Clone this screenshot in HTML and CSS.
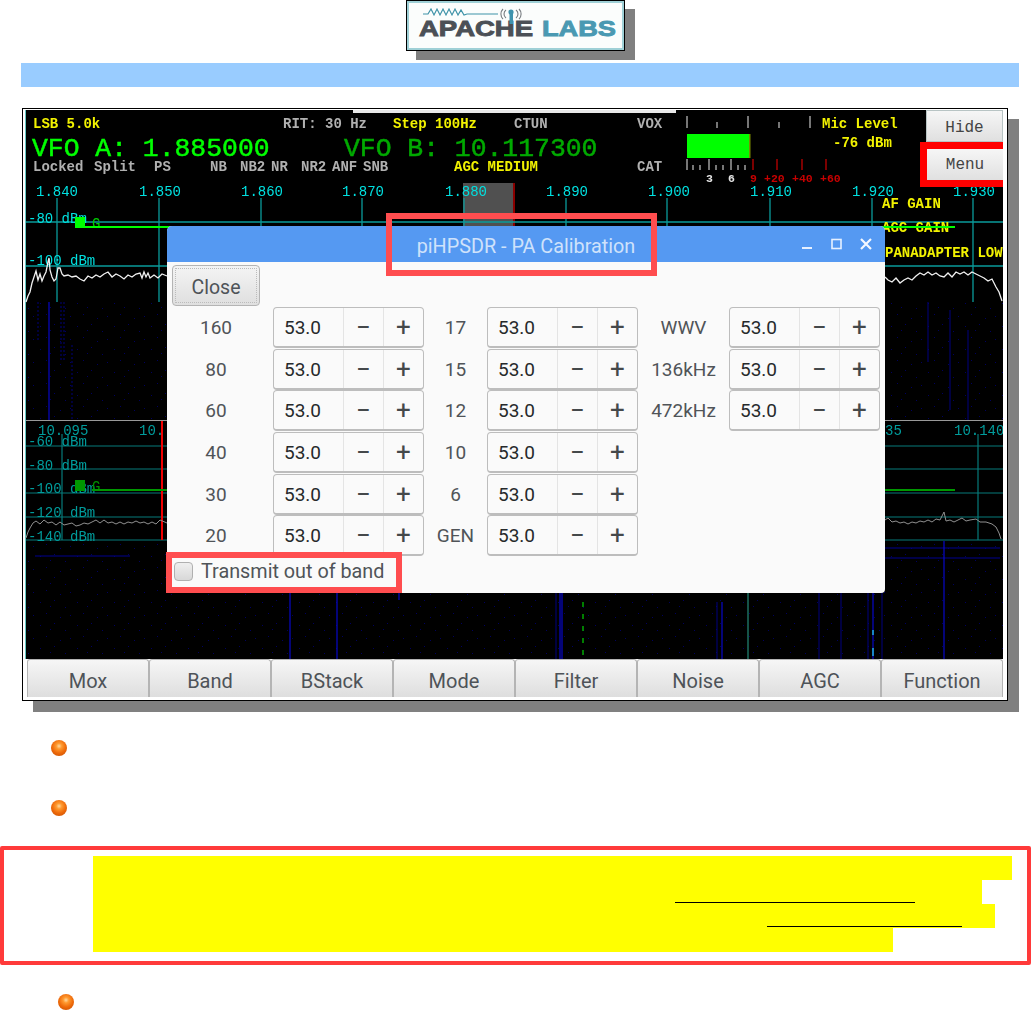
FILE: index.html
```html
<!DOCTYPE html>
<html lang="en">
<head>
<meta charset="utf-8">
<title>piHPSDR - PA Calibration</title>
<link rel="stylesheet" href="styles.css">
</head>
<body>
<header class="logo-row">
  <div class="logo">
    <svg class="logo-art" viewBox="408 2 215 47" width="215" height="47">
      <polyline class="logo-wave" points="423,14 428,14 431,9 434,15 437,9 440,15 443,9 446,15 449,9 452,15 455,9 458,15 461,10 464,15 467,14 498,14"/>
      <path class="logo-arc" d="M503 9a7 7 0 0 0 0 10M506 10a5 5 0 0 0 0 8M519 9a7 7 0 0 1 0 10M516 10a5 5 0 0 1 0 8"/>
      <text class="logo-dark" x="419" y="36" textLength="114" lengthAdjust="spacingAndGlyphs">APACHE</text>
      <text class="logo-blue" x="542" y="36" textLength="74" lengthAdjust="spacingAndGlyphs">LABS</text>
      <rect class="logo-mast" x="509.5" y="11" width="3.5" height="13"/>
      <circle class="logo-top" cx="511" cy="12" r="2.6"/>
    </svg>
  </div>
</header>
<div class="blue-bar"></div>
<figure class="shot">
  <div class="screen">
    <svg class="sdr" viewBox="25 110 978 549" width="978" height="549">
      <defs>
        <pattern id="noise" width="37" height="23" patternUnits="userSpaceOnUse">
          <rect x="3" y="4" width="1" height="1" class="fall-dot"/>
          <rect x="17" y="2" width="1" height="1" class="fall-dot"/>
          <rect x="28" y="9" width="1" height="1" class="fall-dot"/>
          <rect x="9" y="15" width="1" height="1" class="fall-dot"/>
          <rect x="23" y="19" width="1" height="1" class="fall-dot"/>
          <rect x="33" y="17" width="1" height="1" class="fall-dot"/>
          <rect x="13" y="8" width="1" height="1" class="fall-dot"/>
        </pattern>
      </defs>
      <rect class="bg" x="25" y="110" width="978" height="549"/>
      <rect class="top-strip" x="353" y="110" width="323" height="3"/>
      <rect class="edge" x="25" y="110" width="1" height="549"/>

      <rect class="noise" x="26" y="302" width="977" height="118"/>
      <rect class="noise" x="26" y="541" width="977" height="118"/>

      <text class="t y" x="33" y="128">LSB 5.0k</text>
      <text class="t g" x="283" y="128">RIT: 30 Hz</text>
      <text class="t y" x="393" y="128">Step 100Hz</text>
      <text class="t g" x="514" y="128">CTUN</text>
      <text class="t g" x="637" y="128">VOX</text>
      <text class="t y" x="822" y="128">Mic Level</text>
      <text class="t y" x="833" y="147">-76 dBm</text>
      <text class="vfo vfo-a" x="32" y="156">VFO A: 1.885000</text>
      <text class="vfo vfo-b" x="344" y="156">VFO B: 10.117300</text>
      <text class="t g" x="33" y="171">Locked</text>
      <text class="t g" x="94" y="171">Split</text>
      <text class="t g" x="154" y="171">PS</text>
      <text class="t g" x="210" y="171">NB</text>
      <text class="t g" x="240" y="171">NB2</text>
      <text class="t g" x="271" y="171">NR</text>
      <text class="t g" x="301" y="171">NR2</text>
      <text class="t g" x="332" y="171">ANF</text>
      <text class="t g" x="363" y="171">SNB</text>
      <text class="t y" x="454" y="171">AGC MEDIUM</text>
      <text class="t g" x="637" y="171">CAT</text>

      <path class="tick-g" d="M687 116v12M717 122v6M748 116v12M779 122v6M810 116v12"/>
      <rect class="meter" x="687" y="134" width="63" height="24"/>
      <rect class="meter-end" x="749" y="134" width="1.5" height="24"/>
      <path class="tick-g" d="M687 159v11M693 165v5M700 165v5M709 159v11M716 165v5M723 165v5M731 159v11M738 165v5M745 165v5"/>
      <path class="tick-r" d="M753 159v11M777 159v11M802 159v11M826 159v11"/>
      <text class="mini w" x="706" y="182">3</text>
      <text class="mini w" x="728" y="182">6</text>
      <text class="mini r" x="750" y="182">9</text>
      <text class="mini r" x="764" y="182">+20</text>
      <text class="mini r" x="792" y="182">+40</text>
      <text class="mini r" x="820" y="182">+60</text>

      <rect class="band" x="463" y="183" width="50" height="43"/>
      <rect class="band-edge" x="513" y="183" width="2" height="43"/>
      <path class="grid" d="M57 198v104M159 198v104M261 198v104M362 198v104M464 198v104M566 198v104M667 198v104M770 198v104M872 198v104M973 198v104M26 222h977M26 266h977"/>
      <text class="f c" x="36" y="196">1.840</text>
      <text class="f c" x="139" y="196">1.850</text>
      <text class="f c" x="241" y="196">1.860</text>
      <text class="f c" x="342" y="196">1.870</text>
      <text class="f c" x="445" y="196">1.880</text>
      <text class="f c" x="546" y="196">1.890</text>
      <text class="f c" x="648" y="196">1.900</text>
      <text class="f c" x="750" y="196">1.910</text>
      <text class="f c" x="852" y="196">1.920</text>
      <text class="f c" x="953" y="196">1.930</text>
      <text class="f c" x="28" y="223">-80 dBm</text>
      <text class="f c" x="28" y="265">-100 dBm</text>
      <text class="t y" x="882" y="208">AF GAIN</text>
      <text class="t y" x="882" y="232">AGC GAIN</text>
      <text class="t y" x="885" y="257">PANADAPTER LOW</text>
      <rect class="mark" x="75" y="217" width="10" height="11"/>
      <text class="f mark-t" x="92" y="228">G</text>
      <path class="mark-line" d="M85 227H170M882 227H955"/>
      <polyline class="trace" points="26,302 28,296 30,292 32,283 34,277 36,271 38,280 40,274 42,281 44,276 46,272 48,262 49,258 50,270 52,277 54,281 56,279 58,268 60,268 62,274 64,276 68,275 72,277 76,276 80,279 84,281 88,276 92,278 96,275 100,277 104,274 108,272 112,277 116,274 120,276 124,279 128,275 132,277 136,274 140,273 142,278 144,272 146,277 148,273 150,278 154,275 158,278 162,274 167,276"/>
      <polyline class="trace" points="885,277 888,280 892,282 896,278 900,283 904,280 908,278 912,280 916,276 920,273 924,275 928,272 932,275 936,273 940,276 944,277 948,273 952,277 956,272 960,274 964,272 968,275 972,272 976,274 980,276 984,278 988,281 992,279 996,287 999,292 1001,298 1002,301"/>

      <path class="fall" d="M49 302v118"/>
      <path class="fall-dash" d="M64 302v60M38 302v40M72 345v75M61 302v60"/>
      <path class="fall-faint" d="M928 302v60M950 310v100M968 330v90"/>

      <rect class="divider" x="26" y="420" width="977" height="1"/>
      <rect class="bg" x="26" y="421" width="977" height="120"/>
      <path class="grid-d" d="M26 446h977M26 469h977M26 493h977M26 517h977M26 540h977M62 434v106M978 434v106"/>
      <text class="f d" x="38" y="435">10.095</text>
      <text class="f d" x="139" y="435">10.</text>
      <text class="f d" x="885" y="435">35</text>
      <text class="f d" x="954" y="435">10.140</text>
      <text class="f d" x="28" y="446">-60 dBm</text>
      <text class="f d" x="28" y="470">-80 dBm</text>
      <text class="f d" x="28" y="493">-100 dBm</text>
      <text class="f d" x="28" y="517">-120 dBm</text>
      <text class="f d" x="28" y="541">-140 dBm</text>
      <rect class="red" x="161" y="421" width="2" height="119"/>
      <rect class="mark-d" x="75" y="480" width="10" height="11"/>
      <text class="f mark-dt" x="92" y="491">G</text>
      <path class="mark-dl" d="M92 490H167M882 490H955"/>
      <polyline class="trace-d" points="26,538 28,532 30,528 33,523 36,521 40,524 44,520 48,523 52,522 56,525 60,522 64,525 68,524 72,523 76,526 80,525 84,523 88,524 92,522 96,520 100,523 104,520 108,523 112,522 116,524 120,522 124,524 128,522 132,523 136,521 140,523 144,522 148,524 152,522 156,524 160,520 167,523"/>
      <polyline class="trace-d" points="885,520 888,518 892,522 896,521 900,523 904,522 908,524 912,522 916,523 920,521 924,522 928,520 932,522 936,519 940,520 944,512 946,521 950,520 954,522 958,520 962,518 966,521 970,520 976,519 980,522 986,522 992,524 996,527 999,533 1001,539"/>

      <path class="fall-thin" d="M35 556H130M885 548H1000M885 558H1000"/>
      <path class="fall" d="M290 592v67M337 592v67M399 592v8M560 592v67M562 592v67M722 602v57M873 592v67M944 541v118"/>
      <path class="fall-faint" d="M556 592v67M717 602v57M819 592v67M841 592v67M882 592v67M868 592v67"/>
      <path class="fall-teal" d="M748 592v67"/>
      <path class="fall-green" d="M583 602v57"/>
      <path class="fall-hot" d="M873 630v5M873 648v8"/>
    </svg>

    <div class="toolbar">
      <button class="tool">Mox</button>
      <button class="tool">Band</button>
      <button class="tool">BStack</button>
      <button class="tool">Mode</button>
      <button class="tool">Filter</button>
      <button class="tool">Noise</button>
      <button class="tool">AGC</button>
      <button class="tool">Function</button>
    </div>

    <button class="side side-hide">Hide</button>
    <button class="side side-menu">Menu</button>

    <section class="dialog">
      <div class="titlebar">
        <span class="title">piHPSDR - PA Calibration</span>
        <svg class="win-btns" viewBox="0 0 72 14" width="72" height="14">
          <rect class="wb" x="1" y="10" width="10" height="2"/>
          <rect class="wb-o" x="31" y="2.5" width="9" height="9"/>
          <path class="wb-x" d="M60 2l10 10M70 2L60 12"/>
        </svg>
      </div>
      <div class="dlg-body">
        <button class="close">Close</button>
        <div class="cal-grid">
          <span class="lbl lbl-first">160</span><div class="spin"><span class="val">53.0</span><span class="op">−</span><span class="op">+</span></div>
          <span class="lbl">17</span><div class="spin"><span class="val">53.0</span><span class="op">−</span><span class="op">+</span></div>
          <span class="lbl">WWV</span><div class="spin"><span class="val">53.0</span><span class="op">−</span><span class="op">+</span></div>

          <span class="lbl lbl-first">80</span><div class="spin"><span class="val">53.0</span><span class="op">−</span><span class="op">+</span></div>
          <span class="lbl">15</span><div class="spin"><span class="val">53.0</span><span class="op">−</span><span class="op">+</span></div>
          <span class="lbl">136kHz</span><div class="spin"><span class="val">53.0</span><span class="op">−</span><span class="op">+</span></div>

          <span class="lbl lbl-first">60</span><div class="spin"><span class="val">53.0</span><span class="op">−</span><span class="op">+</span></div>
          <span class="lbl">12</span><div class="spin"><span class="val">53.0</span><span class="op">−</span><span class="op">+</span></div>
          <span class="lbl">472kHz</span><div class="spin"><span class="val">53.0</span><span class="op">−</span><span class="op">+</span></div>

          <span class="lbl lbl-first">40</span><div class="spin"><span class="val">53.0</span><span class="op">−</span><span class="op">+</span></div>
          <span class="lbl">10</span><div class="spin"><span class="val">53.0</span><span class="op">−</span><span class="op">+</span></div>
          <span></span><span></span>

          <span class="lbl lbl-first">30</span><div class="spin"><span class="val">53.0</span><span class="op">−</span><span class="op">+</span></div>
          <span class="lbl">6</span><div class="spin"><span class="val">53.0</span><span class="op">−</span><span class="op">+</span></div>
          <span></span><span></span>

          <span class="lbl lbl-first">20</span><div class="spin"><span class="val">53.0</span><span class="op">−</span><span class="op">+</span></div>
          <span class="lbl">GEN</span><div class="spin"><span class="val">53.0</span><span class="op">−</span><span class="op">+</span></div>
          <span></span><span></span>
        </div>
        <label class="check"><span class="box"></span>Transmit out of band</label>
      </div>
    </section>

    <div class="hl hl-title"></div>
    <div class="hl hl-check"></div>
  </div>
</figure>

<div class="bullet bullet-a"></div>
<div class="bullet bullet-b"></div>

<aside class="warn">
  <div class="warn-line warn-1"></div>
  <div class="warn-line warn-2"><span class="rule rule-2"></span></div>
  <div class="warn-line warn-3"><span class="rule rule-3"></span></div>
  <div class="warn-line warn-4"></div>
</aside>

<div class="bullet bullet-c"></div>
</body>
</html>
```

FILE: styles.css
```css
html, body { margin: 0; padding: 0; background: #fff; }
body { width: 1031px; height: 1010px; overflow: hidden; font-family: Roboto, sans-serif; }
button { font-family: Roboto, sans-serif; padding: 0; }

/* logo */
.logo-row { height: 63px; padding-left: 406px; box-sizing: border-box; }
.logo { width: 219px; height: 51px; box-sizing: border-box; border: 1px solid #000; background: #fbfdfc; box-shadow: 10px 9px 0 #808080, inset 0 0 0 2px #9fd0d6; display: flex; align-items: center; justify-content: center; }
.logo-art { display: block; }
.logo-wave { fill: none; stroke: #3f93a8; stroke-width: 1.2; }
.logo-arc { fill: none; stroke: #777c80; stroke-width: 1.1; }
.logo-mast, .logo-top { fill: #3f93ad; }
.logo-dark, .logo-blue { font-family: "Liberation Sans", sans-serif; font-weight: 700; font-size: 22px; stroke-width: 0.9px; }
.logo-dark { fill: #4b5056; stroke: #4b5056; }
.logo-blue { fill: #4a99b2; stroke: #4a99b2; }

.blue-bar { height: 24px; margin-left: 21px; width: 998px; background: #99ccff; }

/* screenshot */
.shot { margin: 21px 0 0 22px; width: 986px; height: 593px; box-sizing: border-box; border: 1px solid #000; padding: 1px 4px 3px 2px; background: #fff; box-shadow: 11px 11px 0 #808080; }
.screen { position: relative; width: 978px; height: 587px; display: flex; flex-direction: column; }
.sdr { display: block; flex: none; filter: blur(0.4px); }

.bg { fill: #000; }
.top-strip { fill: #e8e8e8; }
.edge { fill: #63c9c4; }
.noise { fill: url(#noise); }
.fall-dot { fill: #000060; }

.t, .f, .vfo, .mini { font-family: "Liberation Mono", monospace; }
.t { font-size: 14px; font-weight: 700; }
.f { font-size: 14px; }
.vfo { font-size: 26.4px; font-weight: 400; stroke-width: 0.5px; }
.mini { font-size: 11.5px; font-weight: 700; }
.y { fill: #f2f200; }
.g { fill: #b0b0b0; }
.c { fill: #00e0e0; }
.d { fill: #009c9c; }
.w { fill: #e4e4e4; }
.r { fill: #c80000; }
.vfo-a { fill: #00ff00; stroke: #00ff00; }
.vfo-b { fill: #00aa00; stroke: #00aa00; }

.tick-g { stroke: #a8a8a8; stroke-width: 1.4; fill: none; }
.tick-r { stroke: #b00000; stroke-width: 1.4; fill: none; }
.meter { fill: #00ff00; }
.meter-end { fill: #7a8a00; }

.band { fill: #505050; }
.band-edge { fill: #8a0000; }
.grid { stroke: #0a9a9a; stroke-width: 1.3; fill: none; }
.grid-d { stroke: #067a7a; stroke-width: 1.2; fill: none; }
.mark { fill: #00ff00; }
.mark-t { fill: #00d000; }
.mark-line { stroke: #00ff00; stroke-width: 2; fill: none; }
.mark-d { fill: #009800; }
.mark-dt { fill: #009000; }
.mark-dl { stroke: #009800; stroke-width: 2; fill: none; }
.trace { fill: none; stroke: #f0f0f0; stroke-width: 1.3; }
.trace-d { fill: none; stroke: #909090; stroke-width: 1; }
.divider { fill: #999; }
.red { fill: #f00000; }
.fall { stroke: #0808c8; stroke-width: 1.2; fill: none; }
.fall-dash { stroke: #00007a; stroke-width: 1; stroke-dasharray: 2 2; fill: none; }
.fall-faint { stroke: #000080; stroke-width: 1; fill: none; }
.fall-thin { stroke: #000090; stroke-width: 1; fill: none; }
.fall-teal { stroke: #2aa58f; stroke-width: 1; fill: none; }
.fall-green { stroke: #00a800; stroke-width: 1.5; stroke-dasharray: 5 7; fill: none; }
.fall-hot { stroke: #20b0e0; stroke-width: 1.5; fill: none; }

/* toolbar */
.toolbar { display: flex; height: 38px; padding: 0 0 0 2px; box-sizing: border-box; background: #fff; }
.tool { flex: 1 1 0; border: 1px solid #b4b4b4; border-bottom: none; border-radius: 3px 3px 0 0; padding-top: 5px; background: linear-gradient(#f6f6f6, #dedede); color: #4e5358; font-size: 20px; }

/* Hide / Menu */
.side { position: absolute; box-sizing: border-box; border: 1px solid #b8c4c4; padding-top: 0; background: linear-gradient(#f6f6f6, #e0e0e0); color: #444; font-family: "Liberation Mono", monospace; font-size: 16px; }
.side-hide { left: 901px; top: 0; width: 77px; height: 32px; padding-top: 4px; }
.side-menu { left: 895px; top: 32px; width: 83px; height: 45px; border: 7px solid #f00; border-right: none; }

/* dialog */
.dialog { position: absolute; left: 142px; top: 116px; width: 718px; height: 367px; background: #fafafa; border-radius: 5px 5px 4px 4px; overflow: hidden; }
.titlebar { position: relative; height: 36px; box-sizing: border-box; padding-top: 4px; background: #5599f2; display: flex; align-items: center; justify-content: center; }
.title { color: #cfe2fb; font-size: 19.8px; }
.win-btns { position: absolute; left: 634px; top: 11px; }
.wb { fill: #e6f0ff; }
.wb-o { fill: none; stroke: #e6f0ff; stroke-width: 1.6; }
.wb-x { fill: none; stroke: #f4f8ff; stroke-width: 2.2; }

.dlg-body { padding: 3px 5px 0; }
.close { display: block; width: 88px; height: 41px; border: 1px solid #b4b4b4; border-radius: 4px; padding-top: 3px; background: linear-gradient(#f4f4f4, #dfdfdf); color: #4e5358; font-size: 19.5px; outline: 1px dotted #bbb; outline-offset: -4px; }
.cal-grid { margin-top: 1px; display: grid; grid-template-columns: 101px 151px 63px 151px 91px 151px; grid-auto-rows: 41.67px; }
.lbl { display: flex; align-items: center; justify-content: center; box-sizing: border-box; color: #505458; font-size: 19px; height: 41px; }
.lbl-first { padding-right: 13px; }
.spin { display: grid; grid-template-columns: 69px 40px 1fr; height: 41px; box-sizing: border-box; border: 1px solid #bdbdbd; border-bottom-width: 2px; border-radius: 4px; background: #fafafa; color: #3a3f42; font-size: 19px; }
.val { display: flex; align-items: center; padding: 1px 0 0 10px; color: #26292b; }
.op { display: flex; align-items: center; justify-content: center; border-left: 1px solid #e4e4e4; color: #44484a; font-size: 26px; }

.check { display: flex; align-items: center; height: 34px; margin-top: -2px; padding-left: 2px; color: #505458; font-size: 19.8px; }
.box { width: 17px; height: 17px; margin-right: 8px; border: 1px solid #b0b0b0; border-radius: 4px; background: linear-gradient(#efefef, #d8d8d8); }

.hl { position: absolute; box-sizing: border-box; border: 6px solid #ff4d4f; }
.hl-title { left: 361px; top: 103px; width: 271px; height: 63px; }
.hl-check { left: 141px; top: 442px; width: 236px; height: 41px; }

/* bullets */
.bullet { width: 16px; height: 16px; border-radius: 50%; background: radial-gradient(circle at 50% 38%, #ffd9a0 0, #ff9a30 22%, #ee6a0a 55%, #c24a00 100%); }
.bullet-a { margin: 39px 0 0 51px; }
.bullet-b { margin: 44px 0 0 51px; }
.bullet-c { margin: 29px 0 0 58px; }

/* warning block */
.warn { margin-top: 30px; width: 1031px; height: 119px; box-sizing: border-box; border: 4px solid #ff3a3a; border-radius: 2px; padding: 6px 0 0 89px; }
.warn-line { height: 24px; background: #ffff00; display: flex; align-items: flex-end; }
.warn-1 { width: 919px; }
.warn-2 { width: 889px; }
.warn-3 { width: 902px; }
.warn-4 { width: 800px; }
.rule { display: block; height: 1.4px; background: #000; margin-bottom: 1px; }
.rule-2 { margin-left: 582px; width: 240px; }
.rule-3 { margin-left: 674px; width: 195px; }
```
